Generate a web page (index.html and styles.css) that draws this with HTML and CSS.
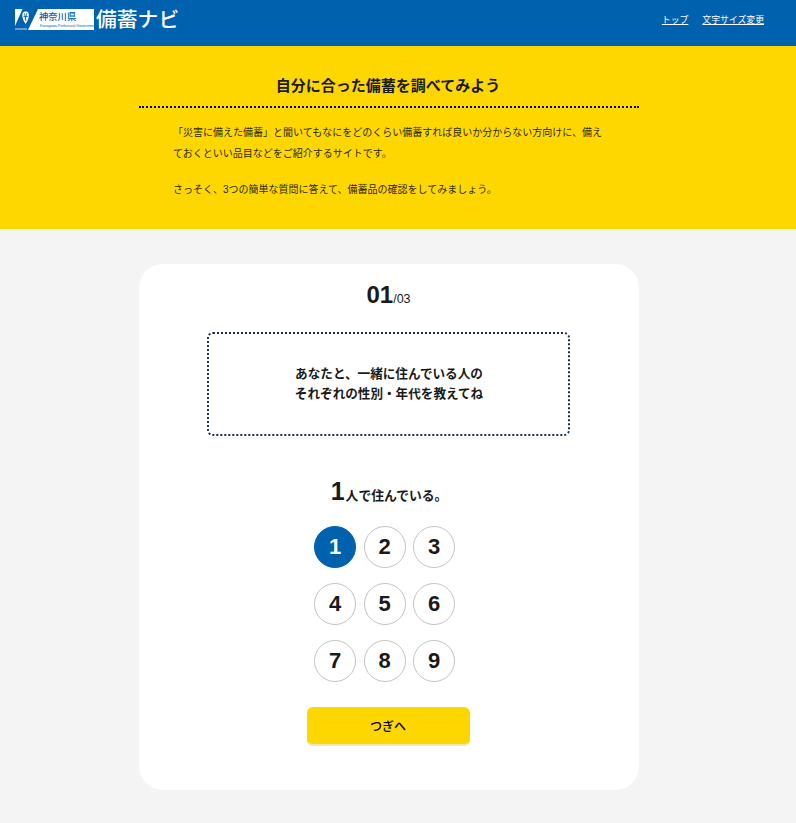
FILE: index.html
```html
<!DOCTYPE html>
<html lang="ja">
<head>
<meta charset="utf-8">
<title>備蓄ナビ</title>
<link rel="stylesheet" href="styles.css">
</head>
<body>
<header class="site-header">
  <a class="logo" href="#">
    <svg class="logo-mark" width="81" height="22" viewBox="0 0 81 22" aria-hidden="true">
      <path d="M1 0H8.500L1 17Z" fill="#fff"/>
      <path d="M1 19.500H13V20.500H1Z" fill="#cfe0ef"/>
      <path d="M24 0H80V21H14Z" fill="#fff"/>
      <path d="M8.500 4.500C9.500 2 13.500 2 14.500 4C15.500 7 14.500 11 11.500 15C10 12 7.500 8.500 8.500 4.500Z" fill="#fff"/>
      <path d="M10.500 4.500L12 12M13 4L11 10.500M9.500 7.500H13.800" stroke="#0061af" stroke-width=".8" fill="none"/>
    </svg>
    <span class="logo-pref">神奈川県</span>
    <span class="logo-en">Kanagawa Prefectural Government</span>
    <span class="logo-name">備蓄ナビ</span>
  </a>
  <nav class="site-nav">
    <a href="#">トップ</a>
    <a href="#">文字サイズ変更</a>
  </nav>
</header>

<section class="intro">
  <div class="intro-inner">
    <h1>自分に合った備蓄を調べてみよう</h1>
    <div class="intro-text">
      <p>「災害に備えた備蓄」と聞いてもなにをどのくらい備蓄すれば良いか分からない方向けに、備えておくといい品目などをご紹介するサイトです。</p>
      <p>さっそく、3つの簡単な質問に答えて、備蓄品の確認をしてみましょう。</p>
    </div>
  </div>
</section>

<main class="main">
  <section class="card">
    <div class="step"><strong>01</strong>/03</div>
    <div class="question">あなたと、一緒に住んでいる人の<br>それぞれの性別・年代を教えてね</div>
    <div class="answer"><strong>1</strong>人で住んでいる。</div>
    <div class="numbers">
      <button class="num selected">1</button>
      <button class="num">2</button>
      <button class="num">3</button>
      <button class="num">4</button>
      <button class="num">5</button>
      <button class="num">6</button>
      <button class="num">7</button>
      <button class="num">8</button>
      <button class="num">9</button>
    </div>
    <button class="next">つぎへ</button>
  </section>
</main>
</body>
</html>
```
FILE: styles.css
```css
* { box-sizing: border-box; }
html, body { margin: 0; padding: 0; }
body {
  height: 823px;
  overflow: hidden;
  background: #f4f4f4;
  color: #1a1a1a;
  font-family: "Liberation Sans", "Noto Sans CJK JP", sans-serif;
}
.site-header {
  height: 46px;
  background: #0061af;
  display: flex;
  justify-content: space-between;
  align-items: flex-start;
  padding: 0 32px 0 14px;
}
.logo {
  position: relative;
  display: block;
  width: 170px;
  height: 46px;
  color: #fff;
  text-decoration: none;
}
.logo-mark { position: absolute; left: 0; top: 9px; }
.logo-pref {
  position: absolute;
  left: 25px;
  top: 12px;
  font-size: 9.300px;
  line-height: 11px;
  color: #0061af;
  font-weight: 500;
  white-space: nowrap;
}
.logo-en {
  position: absolute;
  left: 26px;
  top: 24px;
  font-size: 3.600px;
  line-height: 4px;
  color: #0061af;
  white-space: nowrap;
}
.logo-name {
  position: absolute;
  left: 82px;
  top: 6px;
  font-size: 20.800px;
  line-height: 28px;
  font-weight: 500;
  white-space: nowrap;
}
.site-nav {
  display: flex;
  gap: 14px;
  padding-top: 13px;
  font-size: 8.860px;
  line-height: 14px;
}
.site-nav a { color: #fff; text-decoration: underline; }
.intro {
  height: 183px;
  background: #ffd700;
  padding-right: 18px;
}
.intro-inner {
  width: 500px;
  margin: 0 auto;
  padding-top: 29px;
}
.intro h1 {
  margin: 0;
  height: 33px;
  padding-right: 2px;
  border-bottom: 2px dotted #000;
  text-align: center;
  font-size: 15px;
  line-height: 22px;
  font-weight: 700;
}
.intro-text {
  padding: 14px 34px 0;
  font-size: 10px;
  line-height: 21px;
  color: #2e2a10;
}
.intro-text p { margin: 0 0 15px; }
.main {
  padding-top: 35px;
  padding-right: 18px;
}
.card {
  width: 500px;
  height: 526px;
  margin: 0 auto;
  background: #fff;
  border-radius: 24px;
  display: flex;
  flex-direction: column;
  align-items: center;
  padding-top: 16px;
}
.step {
  font-size: 12.500px;
  line-height: 30px;
  height: 30px;
  margin-right: 1px;
}
.step strong { font-size: 24px; font-weight: 700; }
.question {
  width: 363px;
  height: 104px;
  margin: 22px 2px 0 0;
  padding-left: 2px;
  border: 2px dotted #1d2c50;
  border-radius: 6px;
  display: flex;
  align-items: center;
  justify-content: center;
  text-align: center;
  font-size: 12.600px;
  line-height: 20px;
  font-weight: 700;
}
.answer {
  margin-top: 38px;
  height: 34px;
  font-size: 12.800px;
  line-height: 34px;
  font-weight: 700;
}
.answer strong {
  font-size: 25px;
  margin-right: 1px;
}
.numbers {
  margin: 18px 9px 0 0;
  display: grid;
  grid-template-columns: repeat(3, 42px);
  column-gap: 7.500px;
  row-gap: 15px;
}
.num {
  width: 42px;
  height: 42px;
  padding: 0;
  border: 1px solid #c4c4c4;
  border-radius: 50%;
  background: #fff;
  color: #1a1a1a;
  font-family: inherit;
  font-size: 22px;
  font-weight: 700;
}
.num.selected {
  background: #0061af;
  border-color: #0061af;
  color: #fff;
}
.next {
  width: 163px;
  height: 39px;
  margin: 25px 2px 0 0;
  padding: 0;
  border: 0;
  border-bottom: 2px solid #f0e6b0;
  border-radius: 6px;
  background: #ffd700;
  color: #000;
  font-family: inherit;
  font-size: 12px;
  font-weight: 500;
}
```
